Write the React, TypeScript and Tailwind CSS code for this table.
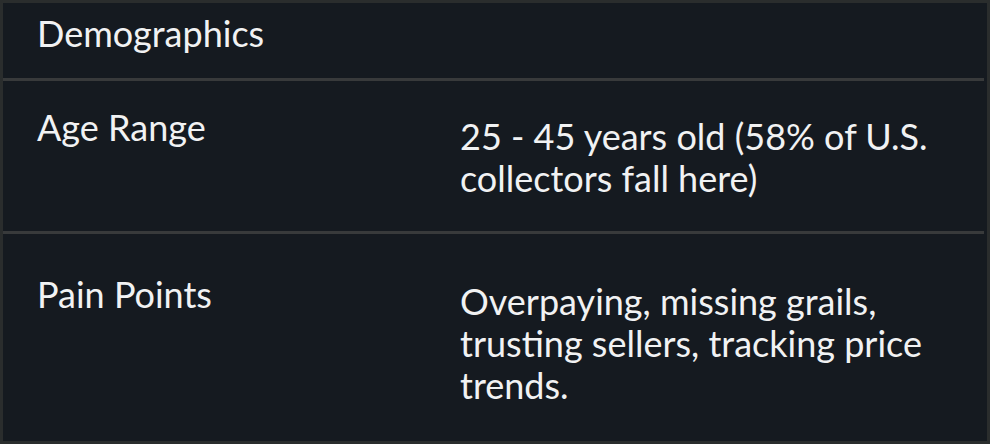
import React from 'react';

const rows = [
  {
    label: 'Age Range',
    value: '25 - 45 years old (58% of U.S. collectors fall here)',
    height: 'h-[150px]',
    labelPad: 'pt-[25px]',
    valuePad: 'pt-[34px]',
  },
  {
    label: 'Pain Points',
    value: 'Overpaying, missing grails, trusting sellers, tracking price trends.',
    height: 'h-[207px]',
    labelPad: 'pt-[39px]',
    valuePad: 'pt-[46px]',
  },
];

export default function App() {
  return (
    <div
      className="w-[990px] h-[444px] border-[3px] border-[#2a2d2d] bg-[#151a20] text-[#f1f2f3] text-[36px] leading-[42px] flex flex-col"
      style={{ fontFamily: 'Lato, "Open Sans", sans-serif' }}
    >
      <div className="h-[75px] pl-[34px] pt-[9px]">Demographics</div>
      {rows.map(row => (
        <div key={row.label} className="flex flex-col">
          <div className="h-[3px] mr-[3px] bg-[#383a3b]" />
          <div className={`flex ${row.height}`}>
            <div className={`w-[423px] pl-[34px] ${row.labelPad}`}>{row.label}</div>
            <div className={`flex-1 pl-[34px] pr-[34px] ${row.valuePad}`}>{row.value}</div>
          </div>
        </div>
      ))}
    </div>
  );
}
